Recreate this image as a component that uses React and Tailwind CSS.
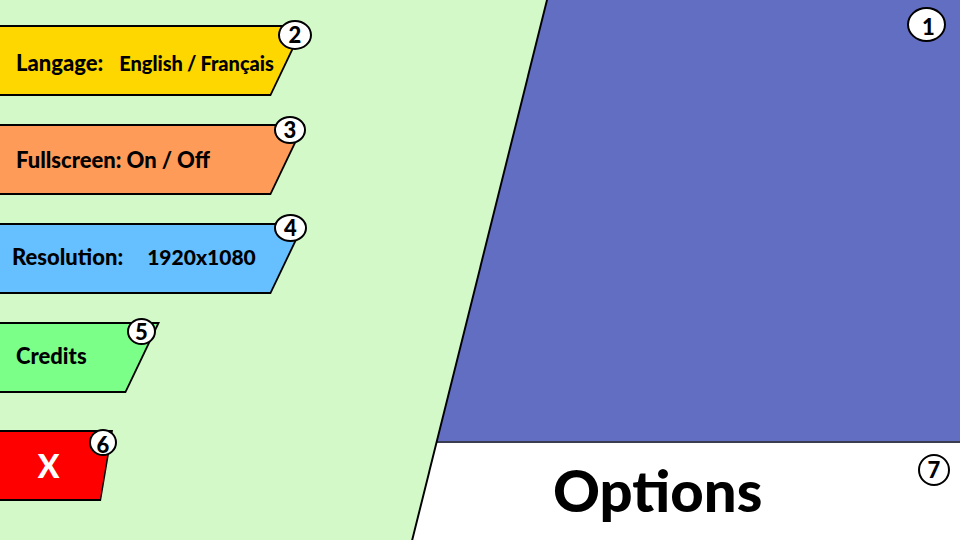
import React from "react";

function Badge({ n, className }) {
  return (
    <span
      className={`absolute flex items-center justify-center rounded-[50%] border-2 border-black bg-white text-[22px] leading-none font-black text-black ${className}`}
    >
      {n}
    </span>
  );
}

const wideOuter = "[clip-path:polygon(0_0,100%_0,calc(100%-34px)_100%,0_100%)]";
const wideInner =
  "[clip-path:polygon(0_0,calc(100%-3px)_0,calc(100%-35px)_100%,0_100%)]";
const slimOuter = "[clip-path:polygon(0_0,100%_0,calc(100%-12px)_100%,0_100%)]";
const slimInner =
  "[clip-path:polygon(0_0,calc(100%-2px)_0,calc(100%-13px)_100%,0_100%)]";

function Tab({ width, color, slim, badge, badgeClass, children }) {
  return (
    <div className={`relative ${width}`}>
      <div className={`bg-black py-[2px] ${slim ? slimOuter : wideOuter}`}>
        <div
          className={`flex h-[67px] items-center ${color} ${slim ? slimInner : wideInner}`}
        >
          {children}
        </div>
      </div>
      <Badge n={badge} className={badgeClass} />
    </div>
  );
}

export default function App() {
  return (
    <main className="grid min-h-screen grid-cols-[413fr_135fr_412fr] bg-white font-['Lato','Liberation_Sans',sans-serif] font-black text-black">
      <section className="col-start-2 col-end-4 row-start-1 flex flex-col">
        <div className="relative flex-1 border-b-2 border-[#3a3c50] bg-[#626ec2]">
          <Badge n="1" className="top-[7px] right-[14px] h-[35px] w-[39px] pt-1 pl-1" />
        </div>
        <div className="relative flex h-[97px] items-start pl-[140px]">
          <h1 className="text-[58px] leading-[94px]">Options</h1>
          <Badge n="7" className="top-[11px] right-[10px] size-[32px]" />
        </div>
      </section>

      <section className="col-start-1 col-end-3 row-start-1 grid bg-black [clip-path:polygon(0_0,100%_0,75.4%_100%,0_100%)]">
        <div className="flex flex-col gap-7 bg-[#d3f9c9] pt-[25px] [clip-path:polygon(0_0,calc(100%-2px)_0,calc(75.4%-2px)_100%,0_100%)]">
          <Tab
            width="w-[305px]"
            color="bg-[#ffd700]"
            badge="2"
            badgeClass="-top-[5px] left-[278px] h-[30px] w-[34px]"
          >
            <div
              role="group"
              aria-labelledby="language"
              className="flex items-baseline gap-4 pt-1 pl-4"
            >
              <span id="language" className="text-[22px]">
                Langage:
              </span>
              <span className="flex gap-1 text-xl">
                <button type="button">English</button>
                <span>/</span>
                <button type="button">Français</button>
              </span>
            </div>
          </Tab>

          <Tab
            width="w-[305px]"
            color="bg-[#ff9b59]"
            badge="3"
            badgeClass="-top-[8px] left-[274px] h-[28px] w-[32px]"
          >
            <div
              role="group"
              aria-labelledby="fullscreen"
              className="flex items-center gap-[5px] pl-4 text-[22px]"
            >
              <span id="fullscreen">Fullscreen:</span>
              <button type="button">On</button>
              <span>/</span>
              <button type="button">Off</button>
            </div>
          </Tab>

          <Tab
            width="w-[305px]"
            color="bg-[#66bfff]"
            badge="4"
            badgeClass="-top-[9px] left-[274px] h-[28px] w-[33px]"
          >
            <div className="flex items-center gap-6 pb-1 pl-3">
              <label htmlFor="resolution" className="text-[22px]">
                Resolution:
              </label>
              <select
                id="resolution"
                className="appearance-none bg-transparent text-[21px] font-black"
                defaultValue="1920x1080"
              >
                <option>1920x1080</option>
              </select>
            </div>
          </Tab>

          <Tab
            width="w-[160px]"
            color="bg-[#7bff89]"
            badge="5"
            badgeClass="-top-[4px] left-[127px] h-[27px] w-[29px]"
          >
            <button type="button" className="h-full w-full pb-1 pl-4 text-left text-[22px]">
              Credits
            </button>
          </Tab>

          <div className="pt-[9px]">
            <Tab
              slim
              width="w-[113px]"
              color="bg-[#ff0000]"
              badge="6"
              badgeClass="-top-[1px] left-[89px] h-[27px] w-[28px] pt-1"
            >
              <button
                type="button"
                className="h-full w-full pr-4 text-center text-[32px] text-white"
              >
                X
              </button>
            </Tab>
          </div>
        </div>
      </section>
    </main>
  );
}
